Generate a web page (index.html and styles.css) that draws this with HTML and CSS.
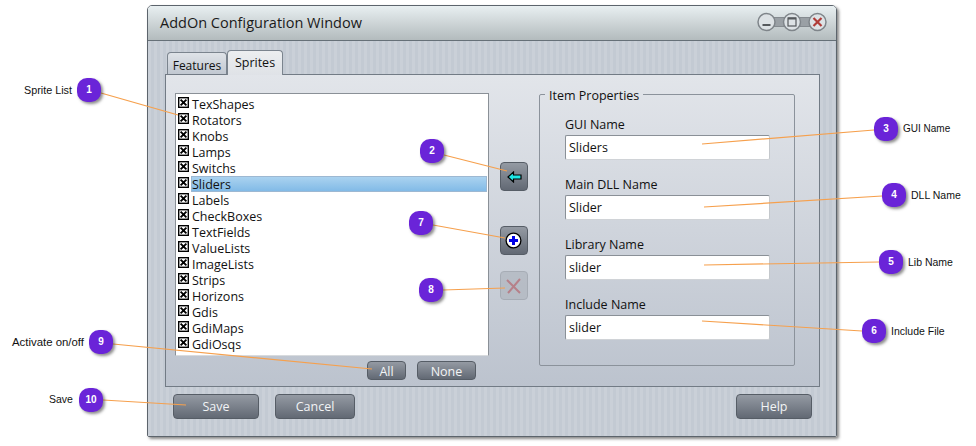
FILE: index.html
```html
<!DOCTYPE html>
<html lang="en">

<head>
    <meta charset="UTF-8" />
    <title>AddOn Configuration Window</title>
    <link rel="stylesheet" href="styles.css">
</head>

<body>
    <svg width="0" height="0" class="defs">
        <symbol id="check" viewBox="0 0 11 11">
            <rect x="0.7" y="0.7" width="9.6" height="9.6" fill="#fff" stroke="#000" stroke-width="1.4" />
            <path d="M2.6 2.6 8.4 8.4M8.4 2.6 2.6 8.4" stroke="#000" stroke-width="1.9" />
        </symbol>
    </svg>

    <div class="window">
        <div class="titlebar">
            <h1>AddOn Configuration Window</h1>
            <svg class="controls" width="72" height="24" viewBox="0 0 72 24">
                <rect x="10" y="7.5" width="52" height="9" fill="#9aa0a5" stroke="#858b90" />
                <g fill="#dde2e5" stroke="#7f858a" stroke-width="1.5">
                    <circle cx="10.5" cy="12" r="8.5" />
                    <circle cx="36" cy="12" r="8.5" />
                    <circle cx="61.5" cy="12" r="8.5" />
                </g>
                <rect x="6.5" y="14" width="8" height="2" fill="#55595c" />
                <rect x="32" y="8" width="8" height="8" fill="none" stroke="#55595c" stroke-width="1.2" />
                <rect x="32" y="7.5" width="8" height="2" fill="#55595c" />
                <path d="M57.5 8 65.5 16M65.5 8 57.5 16" stroke="#b03c38" stroke-width="2.2" />
            </svg>
        </div>
        <div class="content">
            <div class="tabs">
                <div class="tab">Features</div>
                <div class="tab tab-active">Sprites</div>
            </div>
            <div class="panel">
                <div class="list-col">
                    <ul class="list">
                        <li><svg class="check"><use href="#check" /></svg><span>TexShapes</span></li>
                        <li><svg class="check"><use href="#check" /></svg><span>Rotators</span></li>
                        <li><svg class="check"><use href="#check" /></svg><span>Knobs</span></li>
                        <li><svg class="check"><use href="#check" /></svg><span>Lamps</span></li>
                        <li><svg class="check"><use href="#check" /></svg><span>Switchs</span></li>
                        <li class="selected"><svg class="check"><use href="#check" /></svg><span>Sliders</span></li>
                        <li><svg class="check"><use href="#check" /></svg><span>Labels</span></li>
                        <li><svg class="check"><use href="#check" /></svg><span>CheckBoxes</span></li>
                        <li><svg class="check"><use href="#check" /></svg><span>TextFields</span></li>
                        <li><svg class="check"><use href="#check" /></svg><span>ValueLists</span></li>
                        <li><svg class="check"><use href="#check" /></svg><span>ImageLists</span></li>
                        <li><svg class="check"><use href="#check" /></svg><span>Strips</span></li>
                        <li><svg class="check"><use href="#check" /></svg><span>Horizons</span></li>
                        <li><svg class="check"><use href="#check" /></svg><span>Gdis</span></li>
                        <li><svg class="check"><use href="#check" /></svg><span>GdiMaps</span></li>
                        <li><svg class="check"><use href="#check" /></svg><span>GdiOsqs</span></li>
                    </ul>
                    <div class="list-buttons">
                        <button class="btn btn-all">All</button>
                        <button class="btn btn-none">None</button>
                    </div>
                </div>
                <div class="tools">
                    <button class="btn tool">
                        <svg width="16" height="12" viewBox="0 0 16 12">
                            <path d="M2 6 7.5 1V4H15V8H7.5V11Z" fill="#1fe6e6" stroke="#000" stroke-width="1.2" />
                        </svg>
                    </button>
                    <button class="btn tool tool-add">
                        <svg width="18" height="18" viewBox="0 0 18 18">
                            <circle cx="8.5" cy="8.5" r="7.4" fill="#fff" stroke="#000" stroke-width="1.3" />
                            <path d="M8.5 4V13M4 8.5H13" stroke="#0000e6" stroke-width="3" />
                        </svg>
                    </button>
                    <button class="btn tool tool-off">
                        <svg width="16" height="16" viewBox="0 0 16 16">
                            <path d="M1 2 14 15M14 1 2 15" stroke="#b4737c" stroke-width="2" />
                        </svg>
                    </button>
                </div>
                <fieldset class="props">
                    <legend>Item Properties</legend>
                    <div class="field">
                        <label>GUI Name</label>
                        <input type="text" value="Sliders">
                    </div>
                    <div class="field">
                        <label>Main DLL Name</label>
                        <input type="text" value="Slider">
                    </div>
                    <div class="field">
                        <label>Library Name</label>
                        <input type="text" value="slider">
                    </div>
                    <div class="field">
                        <label>Include Name</label>
                        <input type="text" value="slider">
                    </div>
                </fieldset>
            </div>
            <div class="actions">
                <button class="btn btn-save">Save</button>
                <button class="btn btn-cancel">Cancel</button>
                <button class="btn btn-help">Help</button>
            </div>
        </div>
    </div>

    <!-- connector lines between the callouts and the window -->
    <svg class="lines" width="976" height="446" viewBox="0 0 976 446">
        <g stroke="#f6a04d" stroke-width="1.2" fill="none">
            <path d="M101 93 178 115" />
            <path d="M444 155 507 171" />
            <path d="M433 225 505 238" />
            <path d="M443 290 505 288" />
            <path d="M874 130 702 144" />
            <path d="M882 196 704 207" />
            <path d="M879 262 704 265" />
            <path d="M862 331 702 321" />
            <path d="M113 344 372 369" />
            <path d="M103 400 186 405" />
        </g>
    </svg>

    <div class="badge b1">1</div>
    <div class="badge b2">2</div>
    <div class="badge b3">3</div>
    <div class="badge b4">4</div>
    <div class="badge b5">5</div>
    <div class="badge b6">6</div>
    <div class="badge b7">7</div>
    <div class="badge b8">8</div>
    <div class="badge b9">9</div>
    <div class="badge b10">10</div>

    <div class="note n1">Sprite List</div>
    <div class="note n3">GUI Name</div>
    <div class="note n4">DLL Name</div>
    <div class="note n5">Lib Name</div>
    <div class="note n6">Include File</div>
    <div class="note n9">Activate on/off</div>
    <div class="note n10">Save</div>
</body>

</html>
```

FILE: styles.css
```css
* {
    padding: 0;
    margin: 0;
    box-sizing: border-box;
}

body {
    position: relative;
    width: 976px;
    height: 446px;
    overflow: hidden;
    background-color: #fff;
    font-family: "Open Sans", "Noto Sans", sans-serif;
    padding: 5px 0 0 147px;
}

.defs {
    position: absolute;
}

.window {
    width: 690px;
    height: 432px;
    border: 1px solid #5c646c;
    border-radius: 5px 5px 2px 2px;
    box-shadow: 2px 2px 3px rgba(60, 60, 60, .6);
    overflow: hidden;
    display: flex;
    flex-direction: column;
}

.titlebar {
    height: 35px;
    flex: none;
    display: flex;
    align-items: center;
    justify-content: space-between;
    padding: 0 8px 0 12px;
    background: linear-gradient(#e8eff1, #b3bbbd);
    border-bottom: 1px solid #667078;
}

.titlebar h1 {
    font-size: 14.5px;
    font-weight: 400;
    color: #1a1a1a;
    margin-bottom: 2px;
}

.controls {
    margin-bottom: 2px;
}

.content {
    flex: 1;
    padding: 9px 16px 0 17px;
    background-color: #c3cad3;
    background-image: repeating-linear-gradient(90deg, rgba(255, 255, 255, .12) 0 3px, rgba(0, 0, 0, 0) 3px 6px);
}

.tabs {
    display: flex;
    align-items: flex-end;
    height: 24px;
    padding-left: 2px;
    position: relative;
    z-index: 1;
    font-size: 12px;
    color: #111;
}

.tab {
    width: 60px;
    height: 22px;
    line-height: 26px;
    text-align: center;
    background: linear-gradient(#dfe3e8, #c1c8d1);
    border: 1px solid #7b848e;
    border-bottom: 0;
    border-radius: 4px 4px 0 0;
}

.tab-active {
    width: 56px;
    height: 25px;
    line-height: 24px;
    font-size: 12.5px;
    margin-bottom: -1px;
    background: linear-gradient(#eceef0, #dfe2e7);
}

.panel {
    height: 313px;
    display: flex;
    align-items: flex-start;
    gap: 11px;
    padding: 18px 0 0 9px;
    border: 1px solid #727b85;
    background-image: linear-gradient(#e2e5ea, #bcc3ce);
}

.list-col {
    width: 314px;
}

.list {
    list-style: none;
    height: 263px;
    padding: 2px 1px 0 1px;
    background-color: #fff;
    border: 1px solid #8a9097;
    border-bottom-color: #d8dbde;
    font-size: 12.5px;
    color: #111;
}

.list li {
    display: flex;
    align-items: center;
    height: 16px;
}

.list span {
    flex: 1;
    height: 16px;
    line-height: 18px;
    padding-left: 1px;
}

.check {
    width: 11px;
    height: 11px;
    flex: none;
    margin: -3px 2px 0 1px;
}

.selected span {
    background: linear-gradient(#add4f0, #7fb9e6);
    outline: 1px solid #9db8d2;
    outline-offset: -1px;
}

.list-buttons {
    display: flex;
    gap: 11px;
    justify-content: flex-end;
    padding: 5px 13px 0 0;
}

.btn {
    display: flex;
    align-items: center;
    justify-content: center;
    font-family: inherit;
    font-size: 12.5px;
    color: #f2f4f6;
    border: 1px solid #565d66;
    border-radius: 4px;
    background: linear-gradient(#949aa3, #626974);
}

.btn-all {
    width: 39px;
    height: 19px;
    padding-top: 1px;
}

.btn-none {
    width: 59px;
    height: 19px;
    padding-top: 1px;
}

.tools {
    width: 29px;
    flex: none;
    display: flex;
    flex-direction: column;
    padding-top: 69px;
}

.tool {
    width: 28px;
    height: 29px;
}

.tool-add {
    margin-top: 35px;
}

.tool-off {
    margin-top: 16px;
    opacity: .85;
    background: #b4bac3;
    border-color: #a1a7b0;
}

.props {
    width: 256px;
    height: 282px;
    flex: none;
    margin: -9px 0 0 -1px;
    padding: 10px 24px 0 25px;
    border: 1px solid #8b929b;
    border-radius: 2px;
    font-size: 12.5px;
    color: #111;
}

.props legend {
    margin-left: -20px;
    padding: 4px 4px 0;
    line-height: 16px;
}

.field {
    display: flex;
    flex-direction: column;
    height: 60px;
}

.field label {
    height: 21px;
    line-height: 22px;
}

.field input {
    width: 205px;
    height: 25px;
    padding: 0 3px;
    font-family: inherit;
    font-size: 12.5px;
    color: #111;
    background: #fff;
    border: 1px solid #8a9097;
    border-bottom-color: #d0d3d7;
    border-right-color: #c4c8cc;
    border-radius: 2px;
    outline: 0;
}

.actions {
    display: flex;
    height: 25px;
    margin-top: 7px;
    padding: 0 8px;
    gap: 16px;
}

.btn-save {
    width: 86px;
}

.btn-cancel {
    width: 80px;
}

.btn-help {
    width: 76px;
    margin-left: auto;
}

.lines {
    position: absolute;
    left: 0;
    top: 0;
}

.badge {
    position: absolute;
    width: 24px;
    height: 24px;
    border-radius: 10px;
    background-color: #6a24d8;
    box-shadow: 2px 2px 3px rgba(50, 50, 50, .55);
    color: #fff;
    font: bold 10px/24px "Liberation Sans", Arial, sans-serif;
    text-align: center;
}

.b1 { left: 77px; top: 78px; }
.b2 { left: 420px; top: 139px; }
.b3 { left: 874px; top: 117px; }
.b4 { left: 882px; top: 183px; }
.b5 { left: 879px; top: 250px; }
.b6 { left: 862px; top: 319px; }
.b7 { left: 409px; top: 211px; }
.b8 { left: 419px; top: 278px; }
.b9 { left: 89px; top: 330px; }
.b10 { left: 79px; top: 388px; }

.note {
    position: absolute;
    font: 10.5px/12px "Liberation Sans", Arial, sans-serif;
    color: #111;
    white-space: nowrap;
}

.n1 { left: 24px; top: 84px; font-size: 10.8px; }
.n3 { left: 903px; top: 123px; font-size: 10px; }
.n4 { left: 911px; top: 189px; }
.n5 { left: 908px; top: 256px; }
.n6 { left: 891px; top: 325px; }
.n9 { left: 12px; top: 336px; font-size: 11.4px; }
.n10 { left: 49px; top: 393px; }
```
